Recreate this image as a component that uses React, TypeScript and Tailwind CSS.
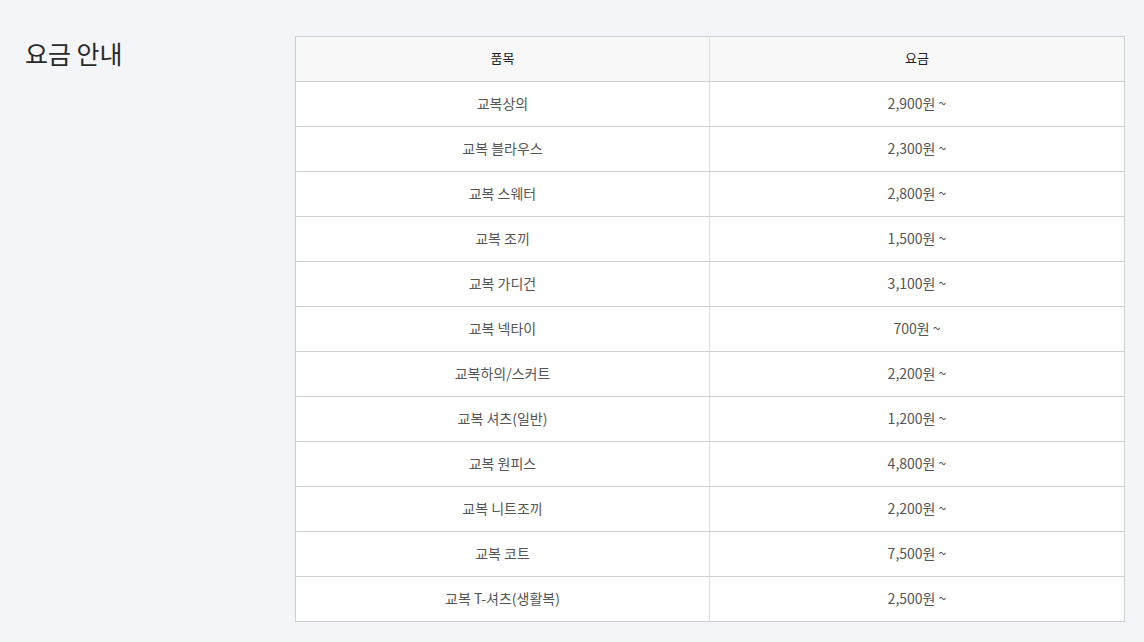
const rows = [
  { name: "교복상의", price: "2,900원 ~" },
  { name: "교복 블라우스", price: "2,300원 ~" },
  { name: "교복 스웨터", price: "2,800원 ~" },
  { name: "교복 조끼", price: "1,500원 ~" },
  { name: "교복 가디건", price: "3,100원 ~" },
  { name: "교복 넥타이", price: "700원 ~" },
  { name: "교복하의/스커트", price: "2,200원 ~" },
  { name: "교복 셔츠(일반)", price: "1,200원 ~" },
  { name: "교복 원피스", price: "4,800원 ~" },
  { name: "교복 니트조끼", price: "2,200원 ~" },
  { name: "교복 코트", price: "7,500원 ~" },
  { name: "교복 T-셔츠(생활복)", price: "2,500원 ~" },
]

export default function App() {
  return (
    <div className="min-h-[642px] bg-[#f4f5f9] font-['Noto_Sans_CJK_KR','Noto_Sans',sans-serif]">
      <div className="flex pt-[36px] pb-5">
        {/* Title */}
        <div className="w-[295px] shrink-0 pl-[25px]">
          <h2 className="text-[25px] leading-[34px] font-normal text-[#2a2a2a]">요금 안내</h2>
        </div>

        {/* Price table */}
        <div className="w-[830px]">
          <table className="w-full table-fixed border-collapse border border-[#cfcfcf] text-center text-[14px]">
            <colgroup>
              <col className="w-[414px]" />
              <col />
            </colgroup>
            <thead>
              <tr className="h-[45px] bg-[#f8f8f8] text-[#222]">
                <th className="border-b border-[#cfcfcf] pb-[2px] text-[13px] font-normal">품목</th>
                <th className="border-b border-l border-[#cfcfcf] border-l-[#dedede] pb-[2px] text-[13px] font-normal">요금</th>
              </tr>
            </thead>
            <tbody className="bg-white text-[#555]">
              {rows.map((row) => (
                <tr key={row.name} className="h-[45px]">
                  <td className="border-b border-[#cfcfcf] pb-[2px]">{row.name}</td>
                  <td className="border-b border-l border-[#cfcfcf] border-l-[#dedede] pb-[2px]">{row.price}</td>
                </tr>
              ))}
            </tbody>
          </table>
        </div>
      </div>
    </div>
  )
}
